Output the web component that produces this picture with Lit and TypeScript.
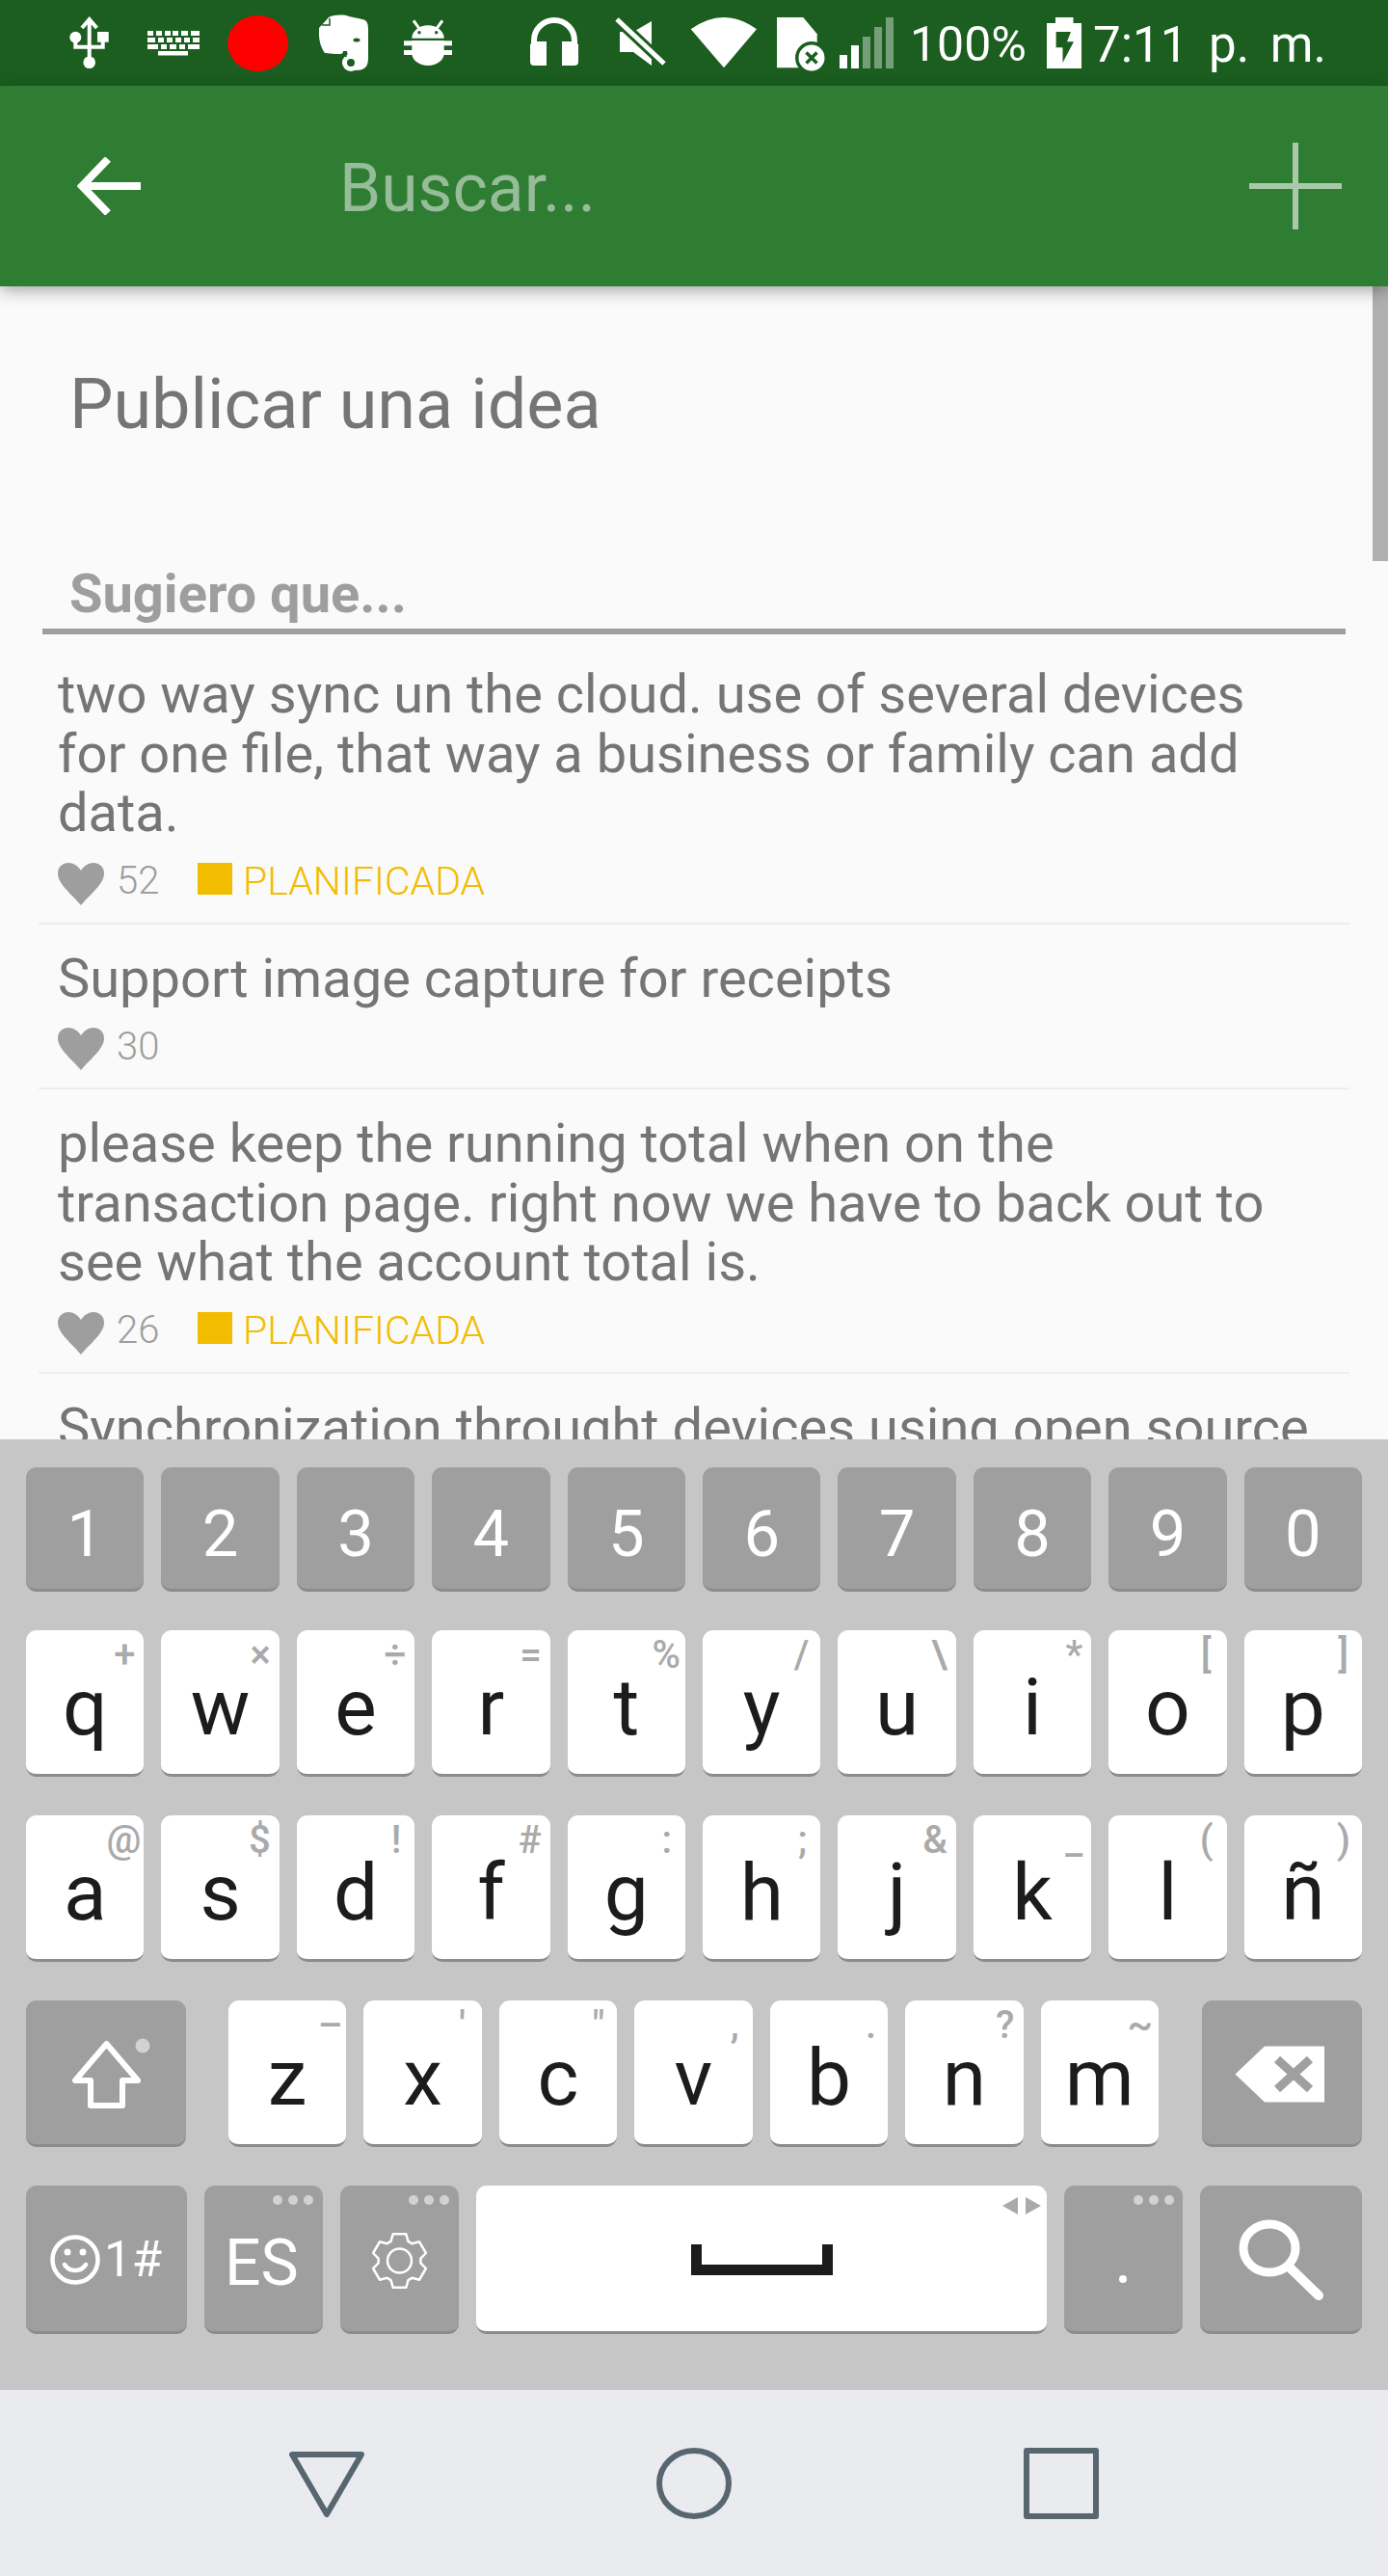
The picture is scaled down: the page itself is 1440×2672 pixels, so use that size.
import { LitElement, html, css, svg } from 'lit';
import { customElement } from 'lit/decorators.js';

const ideas = [
  {
    text: 'two way sync un the cloud. use of several devices for one file, that way a business or family can add data.',
    votes: 52,
    planned: true,
  },
  { text: 'Support image capture for receipts', votes: 30, planned: false },
  {
    text: 'please keep the running total when on the transaction page. right now we have to back out to see what the account total is.',
    votes: 26,
    planned: true,
  },
  { text: 'Synchronization throught devices using open source', votes: 0, planned: false },
];

type KeyDef = [string, string, number?];

const numbers = ['1', '2', '3', '4', '5', '6', '7', '8', '9', '0'];
// letter, hint, hint's distance from the right edge when it isn't the default
const row2: KeyDef[] = [['q', '+'], ['w', '×'], ['e', '÷'], ['r', '='], ['t', '%', 5], ['y', '/', 12], ['u', '\\'], ['i', '*'], ['o', '[', 16], ['p', ']', 14]];
const row3: KeyDef[] = [['a', '@', 3], ['s', '$'], ['d', '!', 14], ['f', '#'], ['g', ':', 14], ['h', ';', 14], ['j', '&'], ['k', '_'], ['l', '(', 14], ['ñ', ')', 12]];
const row4: KeyDef[] = [['z', '–', 4], ['x', "'", 17], ['c', '"', 13], ['v', ',', 14], ['b', '.', 12], ['n', '?'], ['m', '~', 6]];

const DARK = '#1b5e20';

const heart = html`<svg class="heart" viewBox="0 0 48 44"><path d="M24 44C15 33 0 22 0 11 0 4 5 0 11 0c5 0 10 3 13 8 3-5 8-8 13-8 6 0 11 4 11 11 0 11-15 22-24 33z" /></svg>`;

const threeDots = (x: number) => svg`
  <circle cx=${x} cy="15" r="5" fill="#d2d2d2" />
  <circle cx=${x + 16} cy="15" r="5" fill="#d2d2d2" />
  <circle cx=${x + 32} cy="15" r="5" fill="#d2d2d2" />`;

// six toothed outline, same shape as the keyboard's settings key
function gearPath(cx: number, cy: number) {
  const pts: string[] = [];
  for (let i = 0; i < 6; i++) {
    const a = (i * Math.PI) / 3 - Math.PI / 2;
    const polar: [number, number][] = [
      [22, -0.42],
      [28.5, -0.24],
      [28.5, 0.24],
      [22, 0.42],
    ];
    for (const [r, d] of polar) {
      pts.push(`${(cx + r * Math.cos(a + d)).toFixed(1)} ${(cy + r * Math.sin(a + d)).toFixed(1)}`);
    }
  }
  return `M${pts.join('L')}Z`;
}

@customElement('app-root')
export class AppRoot extends LitElement {
  static styles = css`
    :host {
      display: block;
      width: 1440px;
      height: 2672px;
      font-family: Roboto, sans-serif;
      overflow: hidden;
    }
    .page {
      display: flex;
      flex-direction: column;
      height: 2672px;
      background: #fafafa;
    }

    .status {
      height: 89px;
      flex: none;
      background: #1b5e20;
    }
    .status svg {
      display: block;
      width: 1440px;
      height: 89px;
    }
    .status-text {
      font-size: 50px;
      font-weight: 400;
      fill: #fff;
      font-family: Roboto, sans-serif;
    }
    .clock {
      font-size: 51px;
      word-spacing: 9px;
    }

    .appbar {
      height: 208px;
      flex: none;
      display: flex;
      align-items: center;
      background: #2e7d32;
      box-shadow: 0 4px 16px rgba(0, 0, 0, 0.35);
      position: relative;
      z-index: 1;
      padding: 0 48px 0 80px;
    }
    .back {
      width: 66px;
      height: 60px;
      flex: none;
    }
    .search {
      flex: 1;
      margin: 4px 0 0 206px;
      font-size: 69.5px;
      font-weight: 400;
      color: #97bc99;
    }
    .plus {
      width: 96px;
      height: 90px;
      flex: none;
    }

    .content {
      height: 1196px;
      flex: none;
      overflow: hidden;
      position: relative;
      padding: 0 40px;
    }
    .scrollbar {
      position: absolute;
      top: 0;
      right: 0;
      width: 16px;
      height: 285px;
      background: #b0b0b0;
    }
    h1 {
      margin: 0;
      padding: 85px 0 0 32px;
      height: 130px;
      font-size: 72px;
      line-height: 76px;
      font-weight: 400;
      color: #757575;
    }
    .suggest {
      margin: 0 4px 6px;
      padding: 73px 0 5px 28px;
      border-bottom: 6px solid #9e9e9e;
      font-size: 56px;
      line-height: 62px;
      font-weight: 700;
      color: #9e9e9e;
    }
    .idea {
      padding: 26px 30px 18px 20px;
      border-bottom: 2px solid #eeeeee;
    }
    .idea p {
      margin: 0;
      font-size: 56px;
      line-height: 61.5px;
      color: #757575;
    }
    .meta {
      display: flex;
      align-items: center;
      margin-top: 20px;
      height: 44px;
      font-size: 40px;
      font-weight: 300;
      color: #9e9e9e;
    }
    .heart {
      width: 48px;
      height: 44px;
      fill: #9e9e9e;
      flex: none;
    }
    .votes {
      margin: -6px 0 0 13px;
      width: 84px;
    }
    .square {
      width: 36px;
      height: 33px;
      margin: -10px 11px 0 0;
      background: #f2bc00;
    }
    .planned {
      margin-top: -6px;
      font-size: 41px;
      color: #f2bc00;
    }

    .keyboard {
      flex: none;
      height: 986px;
      box-sizing: border-box;
      padding: 29px 27px 0;
      display: flex;
      flex-direction: column;
      gap: 40px;
      background: #c6c6c6;
    }
    .row {
      display: flex;
      gap: 18px;
      height: 152px;
    }
    .row.nums {
      height: 129px;
    }
    .row.last {
      height: 154px;
    }
    .key {
      flex: 1;
      min-width: 0;
      position: relative;
      box-sizing: border-box;
      border-radius: 11px;
      background: #fff;
      border-bottom: 3px solid #8c8c8c;
      color: #1c1c1c;
      font-size: 82px;
      line-height: 90px;
      padding-top: 35px;
      text-align: center;
    }
    .key.dark {
      background: #9f9f9f;
      color: #fff;
    }
    .nums .key {
      font-size: 67px;
      padding-top: 31px;
      line-height: 76px;
    }
    .hint {
      position: absolute;
      top: 6px;
      right: 9px;
      font-size: 40px;
      line-height: 40px;
      font-weight: 500;
      color: #aaaaaa;
    }
    .fixed {
      flex: none;
      padding: 0;
    }
    .fixed svg {
      display: block;
    }
    .shift {
      width: 166px;
      margin-right: 26px;
    }
    .back-key {
      width: 166px;
      margin-left: 27px;
    }
    .emoji {
      width: 167px;
    }
    .small {
      width: 123px;
    }
    .space {
      width: 592px;
    }
    .go {
      width: 168px;
    }
    .key-text {
      font-family: Roboto, sans-serif;
      fill: #fff;
      font-weight: 400;
    }

    .nav {
      flex: 1;
      display: flex;
      align-items: center;
      justify-content: center;
      gap: 303px;
      background: #e9ebef;
    }
    .nav svg {
      width: 78px;
      height: 74px;
      fill: none;
      stroke: #57666f;
      stroke-width: 6;
      stroke-linejoin: round;
    }
  `;

  private statusBar() {
    return html`<svg viewBox="0 0 1440 89">
      <!-- usb -->
      <g fill="#fff">
        <circle cx="92.700" cy="64.700" r="6.300" />
        <circle cx="78.300" cy="38.700" r="6" />
        <rect x="101" y="33" width="11.700" height="10.700" />
      </g>
      <path d="M92.700 20v44M85 29l7.700-9 7.700 9M78.300 40v8.700h28.400V40" fill="none" stroke="#fff" stroke-width="4" />
      <!-- keyboard -->
      <path fill="#fff" d="M153 32h6v5h-6zM162 32h6v5h-6zM171 32h6v5h-6zM179 32h6v5h-6zM188 32h7v5h-7zM198 32h9v5h-9zM153 39h8v5h-8zM164 39h6v5h-6zM173 39h6v5h-6zM182 39h6v5h-6zM191 39h6v5h-6zM200 39h7v5h-7zM153 46h11v5h-11zM167 46h6v5h-6zM176 46h7v5h-7zM186 46h6v5h-6zM195 46h12v5h-12zM164 53h31v4.500h-31z" />
      <!-- record dot -->
      <ellipse cx="267.500" cy="45" rx="31.500" ry="29" fill="#f00" />
      <!-- evernote -->
      <path fill="#fff" d="M341 18C347 15 357 15 362 17L376 20C381 21 382 25 382 30V60C382 70 378 73 368 73L362 66L360 53L356 53C356 57 352 56 348 56L337 55C333 50 331 42 331 36L331 29Z" />
      <circle cx="364" cy="65" r="6.500" fill=${DARK} stroke="#fff" stroke-width="5" />
      <path d="M357 55l2 4" stroke=${DARK} stroke-width="2" />
      <ellipse cx="370" cy="41.500" rx="3.500" ry="2" fill=${DARK} />
      <path d="M334 26h8v-7" fill="none" stroke=${DARK} stroke-width="1.500" />
      <!-- android -->
      <g fill="#fff">
        <path d="M427.300 39.700c0-7.400 7.500-13.400 16.700-13.400s16.700 6 16.700 13.400z" />
        <path d="M427.300 42h33.400v13c0 7.500-7.500 13-16.700 13s-16.700-5.500-16.700-13z" />
        <rect x="419" y="42.300" width="50" height="5" />
        <rect x="419" y="52" width="50" height="5" />
      </g>
      <path d="M429 21.300l6 8.400M459 21.300l-6 8.400" stroke="#fff" stroke-width="3" />
      <circle cx="435" cy="33.700" r="1.700" fill=${DARK} />
      <circle cx="452.700" cy="33.700" r="1.700" fill=${DARK} />
      <!-- headphones -->
      <path d="M554 62V42a21 21 0 0 1 42 0v20" fill="none" stroke="#fff" stroke-width="6" />
      <path d="M550 46v18q0 4 4 4h13V43H556zM600 46v18q0 4-4 4h-13V43h11z" fill="#fff" />
      <!-- mute -->
      <path d="M643 33h14l19-11v46L657 54h-14z" fill="#fff" />
      <path d="M640 20l49 46" stroke=${DARK} stroke-width="11" />
      <path d="M640 20l49 46" stroke="#fff" stroke-width="5" />
      <!-- wifi -->
      <path d="M716.700 30.300Q751 5.700 785 30.300L751 70.300z" fill="#fff" />
      <!-- file error -->
      <path d="M806 18h27.300l14.400 17.300v35H806z" fill="#fff" />
      <circle cx="842" cy="60" r="17" fill=${DARK} />
      <circle cx="842" cy="60" r="13.500" fill="#fff" />
      <path d="M836.500 54.500l11 11M847.500 54.500l-11 11" stroke=${DARK} stroke-width="3.500" />
      <!-- signal -->
      <path fill="#fff" d="M871 57h8v14h-8zM883 47h8v24h-8z" />
      <path fill="#fff" opacity="0.4" d="M895 38h8v33h-8zM907 28h8v43h-8zM919 18h8v53h-8z" />
      <!-- battery -->
      <path d="M1095 18h18.500v6h8.500v47h-36V24h9z" fill="#fff" />
      <path d="M1095.600 33v16.300h6.900V65L1114 43.300h-7l4-10.300z" fill=${DARK} />
      <text class="status-text" x="944" y="63">100%</text>
      <text class="status-text clock" x="1134" y="64">7:11 p. m.</text>
    </svg>`;
  }

  private renderKeys(keys: KeyDef[]) {
    return keys.map(
      ([k, h, right]) => html`<div class="key">
        <span class="hint" style=${right === undefined ? '' : `right:${right}px`}>${h}</span>${k}
      </div>`
    );
  }

  render() {
    return html`
      <div class="page">
        <div class="status">${this.statusBar()}</div>

        <header class="appbar">
          <svg class="back" viewBox="0 0 66 60">
            <path d="M66 30H5M32 2L5 30l27 28" fill="none" stroke="#fff" stroke-width="8" />
          </svg>
          <div class="search">Buscar...</div>
          <svg class="plus" viewBox="0 0 96 90">
            <path d="M0 45h96M48 0v90" fill="none" stroke="#a9c9ab" stroke-width="6" />
          </svg>
        </header>

        <main class="content">
          <div class="scrollbar"></div>
          <h1>Publicar una idea</h1>
          <div class="suggest">Sugiero que...</div>
          ${ideas.map(
            (i) => html`<div class="idea">
              <p>${i.text}</p>
              <div class="meta">
                ${heart}
                <span class="votes">${i.votes}</span>
                ${i.planned
                  ? html`<span class="square"></span><span class="planned">PLANIFICADA</span>`
                  : ''}
              </div>
            </div>`
          )}
        </main>

        <section class="keyboard">
          <div class="row nums">
            ${numbers.map((n) => html`<div class="key dark">${n}</div>`)}
          </div>
          <div class="row">${this.renderKeys(row2)}</div>
          <div class="row">${this.renderKeys(row3)}</div>
          <div class="row">
            <div class="key dark fixed shift">
              <svg width="166" height="149" viewBox="0 0 166 149">
                <path d="M83.500 45L51 83h16v26h33V83h16z" fill="none" stroke="#fff" stroke-width="6" stroke-linejoin="round" />
                <circle cx="121" cy="47" r="7.500" fill="#d2d2d2" />
              </svg>
            </div>
            ${this.renderKeys(row4)}
            <div class="key dark fixed back-key">
              <svg width="166" height="149" viewBox="0 0 166 149">
                <path d="M34.500 76.500L65 47.500h62v58H65z" fill="#fff" />
                <path d="M78 61l34 31M112 61L78 92" stroke="#9f9f9f" stroke-width="9" fill="none" />
              </svg>
            </div>
          </div>
          <div class="row last">
            <div class="key dark fixed emoji">
              <svg width="167" height="151" viewBox="0 0 167 151">
                <g fill="none" stroke="#fff" stroke-width="4.500">
                  <circle cx="51" cy="77" r="23.500" />
                  <path d="M40 82c5 8 17 8 22 0" stroke-linecap="round" />
                </g>
                <circle cx="43" cy="69" r="3.500" fill="#fff" />
                <circle cx="59" cy="69" r="3.500" fill="#fff" />
                <text class="key-text" x="81" y="94" font-size="51">1#</text>
              </svg>
            </div>
            <div class="key dark fixed small">
              <svg width="123" height="151" viewBox="0 0 123 151">
                ${threeDots(76)}
                <text class="key-text" x="21" y="103" font-size="66">ES</text>
              </svg>
            </div>
            <div class="key dark fixed small">
              <svg width="123" height="151" viewBox="0 0 123 151">
                ${threeDots(76)}
                <path d=${gearPath(61.5, 78)} fill="none" stroke="#fff" stroke-width="2.500" stroke-linejoin="round" />
                <circle cx="61.500" cy="78" r="12.500" fill="none" stroke="#fff" stroke-width="2.500" />
              </svg>
            </div>
            <div class="key fixed space">
              <svg width="592" height="151" viewBox="0 0 592 151">
                <path d="M228.500 61v26.500h136V61" fill="none" stroke="#1c1c1c" stroke-width="11" />
                <path d="M562 12v18l-16-9zM570 12v18l16-9z" fill="#aaa" />
              </svg>
            </div>
            <div class="key dark fixed small">
              <svg width="123" height="151" viewBox="0 0 123 151">
                ${threeDots(77)}
                <circle cx="61" cy="97" r="4" fill="#fff" />
              </svg>
            </div>
            <div class="key dark fixed go">
              <svg width="168" height="151" viewBox="0 0 168 151">
                <ellipse cx="72" cy="65" rx="27" ry="25" fill="none" stroke="#fff" stroke-width="9" />
                <path d="M93 85l30 29" stroke="#fff" stroke-width="10" stroke-linecap="round" />
              </svg>
            </div>
          </div>
        </section>

        <nav class="nav">
          <svg viewBox="0 0 78 74"><path d="M3 7h72L39 69z" /></svg>
          <svg viewBox="0 0 78 74"><ellipse cx="39" cy="37" rx="36" ry="34" /></svg>
          <svg viewBox="0 0 78 74"><rect x="3" y="3" width="72" height="68" /></svg>
        </nav>
      </div>
    `;
  }
}
